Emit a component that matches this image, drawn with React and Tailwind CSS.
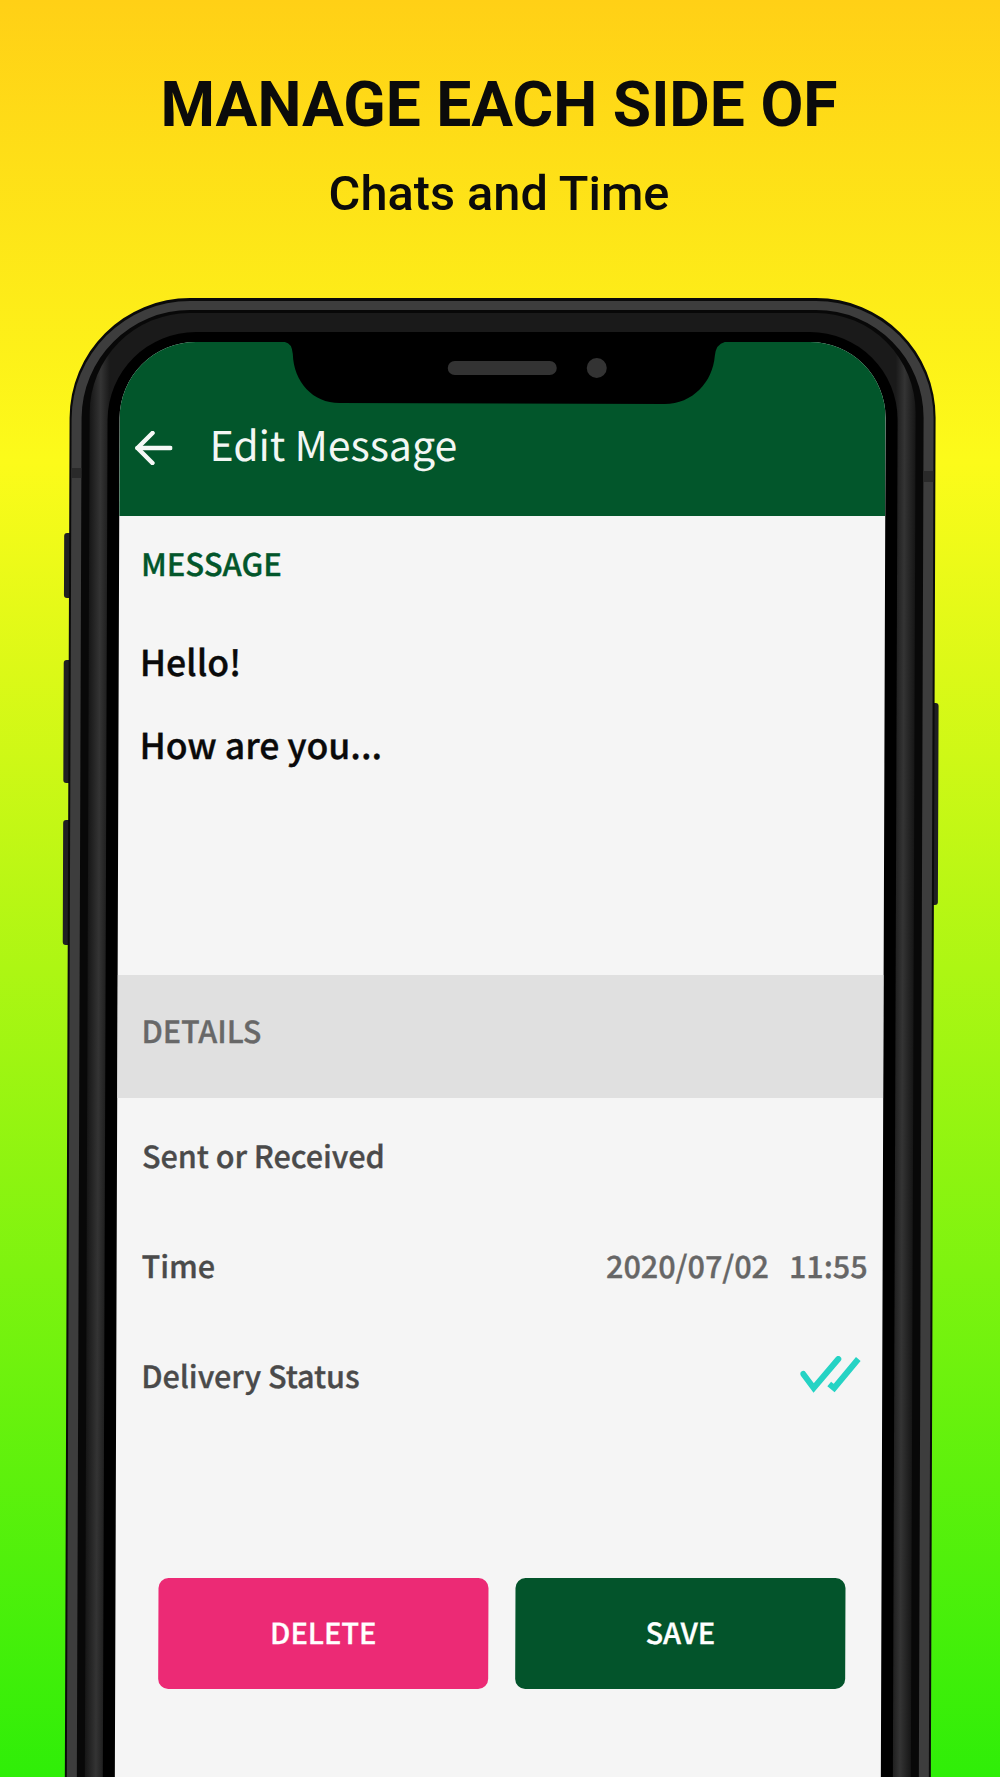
import React from 'react';

const appFont = "font-['Noto_Sans_CJK_JP','Noto_Sans',sans-serif]";
// the shot's type sits between the medium and bold cuts
const heavy = "[-webkit-text-stroke:0.35px_currentColor]";

// Double tick shown on the delivery status row
const DoubleCheck = () => (
  <svg width="62" height="38" viewBox="0 0 62 38" fill="none" stroke="#25d3c4" strokeWidth="6" strokeLinecap="round" strokeLinejoin="miter">
    <path d="M3 18 L13.5 32 L38 3" />
    <path d="M29 28 L34 32 L58 3" strokeLinecap="butt" />
  </svg>
);

const BackArrow = () => (
  <svg width="38" height="34" viewBox="0 0 38 34" fill="none" stroke="#f5f8f6" strokeWidth="4.5" strokeLinecap="round" strokeLinejoin="round">
    <path d="M36 17 H3" />
    <path d="M18 2 L3 17 L18 32" />
  </svg>
);

const Notch = () => (
  <svg className="absolute left-[165px] top-0" width="440" height="62" viewBox="0 0 440 62">
    <path d="M0 0 Q7 1 8 12 C9 40 28 61 55 61 L380 62 C408 62 428 40 430 14 Q431 2 440 0 Z" fill="#000" />
    <rect x="163" y="19" width="109" height="14" rx="7" fill="#333" />
    <circle cx="312" cy="26" r="10" fill="#333" />
  </svg>
);

const DetailRow = ({ label, children, height }) => (
  <div className={`flex items-center justify-between pl-[25px] pr-[15px] ${height}`}>
    <span className={`text-[30.5px] font-medium text-[#4a4a4a] ${heavy}`}>{label}</span>
    {children}
  </div>
);

const SideButton = ({ className }) => (
  <div className={`absolute w-[9px] bg-[#1f1f22] rounded-[3px] ${className}`} />
);

export default function App() {
  return (
    <div className="relative w-[1000px] h-[1777px] overflow-hidden bg-[linear-gradient(180deg,#ffd016_0%,#fcfb1a_26%,#2fee08_100%)]">
      <div className="h-[298px] pt-[72px] pr-[2px] text-center text-[#0b0b0b] font-['Roboto',sans-serif]">
        <h1 className="text-[62.3px] leading-[66px] font-bold">MANAGE EACH SIDE OF</h1>
        <p className="mt-[29px] text-[48.7px] leading-[54px] font-medium">Chats and Time</p>
      </div>

      {/* phone body, slightly leaning like the mockup */}
      <div className="relative ml-[70px] w-[866px] origin-top -skew-x-[0.2deg]">
        <SideButton className="left-[-5px] top-[235px] h-[65px]" />
        <SideButton className="left-[-5px] top-[362px] h-[123px]" />
        <SideButton className="left-[-5px] top-[522px] h-[125px]" />
        <SideButton className="right-[-4px] top-[405px] h-[202px]" />

        <div className="relative h-[1479px] rounded-t-[120px] bg-[#0a0a0a] pt-[3px] px-[2px]">
          {/* antenna lines */}
          <div className="absolute left-[2px] top-[170px] h-[10px] w-[10px] bg-[#2a2a2a]" />
          <div className="absolute right-[2px] top-[173px] h-[11px] w-[10px] bg-[#2a2a2a]" />
          <div className="h-full rounded-t-[118px] bg-[#3d3d3d] pt-[9px] px-[10px]">
            <div className="h-full rounded-t-[108px] bg-[#080808] pt-[3px] px-[8px]">
              <div className="h-full rounded-t-[100px] bg-[linear-gradient(90deg,#161616_0,#343434_11px,#1a1a1a_20px,#1a1a1a_calc(100%-20px),#343434_calc(100%-11px),#161616_100%)] pt-[19px] px-[18px]">
                <div className="h-full rounded-t-[88px] bg-black pt-[10px] px-[12px]">
                  <div className={`relative h-full overflow-hidden rounded-t-[76px] bg-[#f5f5f5] ${appFont}`}>
                    <div className="relative flex h-[174px] items-center bg-[#02562b] pl-[15px] pt-[31px]">
                      <span className="flex w-[75px] pt-[7px]"><BackArrow /></span>
                      <span className="mt-[-3px] text-[41px] leading-none text-[#f3f7f4]">Edit Message</span>
                    </div>
                    <Notch />

                    <div className="h-[459px] pl-[22px]">
                      <p className={`pt-[24px] text-[31px] leading-[46px] font-medium text-[#02562b] ${heavy}`}>MESSAGE</p>
                      <p className={`mt-[52px] ml-[-1px] text-[35.5px] leading-[46px] font-medium text-[#0a0a0a] ${heavy}`}>Hello!</p>
                      <p className={`mt-[37px] ml-[-1px] text-[35.5px] leading-[46px] font-medium text-[#0a0a0a] ${heavy}`}>How are you...</p>
                    </div>

                    <div className={`flex h-[123px] items-center bg-[#e0e0e0] pl-[24px] pb-[11px] text-[30.5px] font-medium text-[#686868] ${heavy}`}>
                      DETAILS
                    </div>

                    <div className="pt-[3px]">
                      <DetailRow label="Sent or Received" height="h-[110px]" />
                      <DetailRow label="Time" height="h-[110px]">
                        <span className={`flex gap-[20px] text-[30.5px] font-medium text-[#666] ${heavy}`}>
                          <span>2020/07/02</span>
                          <span>11:55</span>
                        </span>
                      </DetailRow>
                      <DetailRow label="Delivery Status" height="h-[110px]">
                        <span className="mr-[5px] mt-[-2px]"><DoubleCheck /></span>
                      </DetailRow>
                    </div>

                    <div className="mt-[147px] flex gap-[27px] pl-[43px]">
                      <button className={`flex h-[111px] w-[330px] items-center justify-center rounded-[10px] bg-[#ec2a75] pb-[4px] text-[29px] font-medium text-white ${heavy}`}>DELETE</button>
                      <button className={`flex h-[111px] w-[330px] items-center justify-center rounded-[10px] bg-[#03542b] pb-[4px] text-[29px] font-medium text-white ${heavy}`}>SAVE</button>
                    </div>
                  </div>
                </div>
              </div>
            </div>
          </div>
        </div>
      </div>
    </div>
  );
}
